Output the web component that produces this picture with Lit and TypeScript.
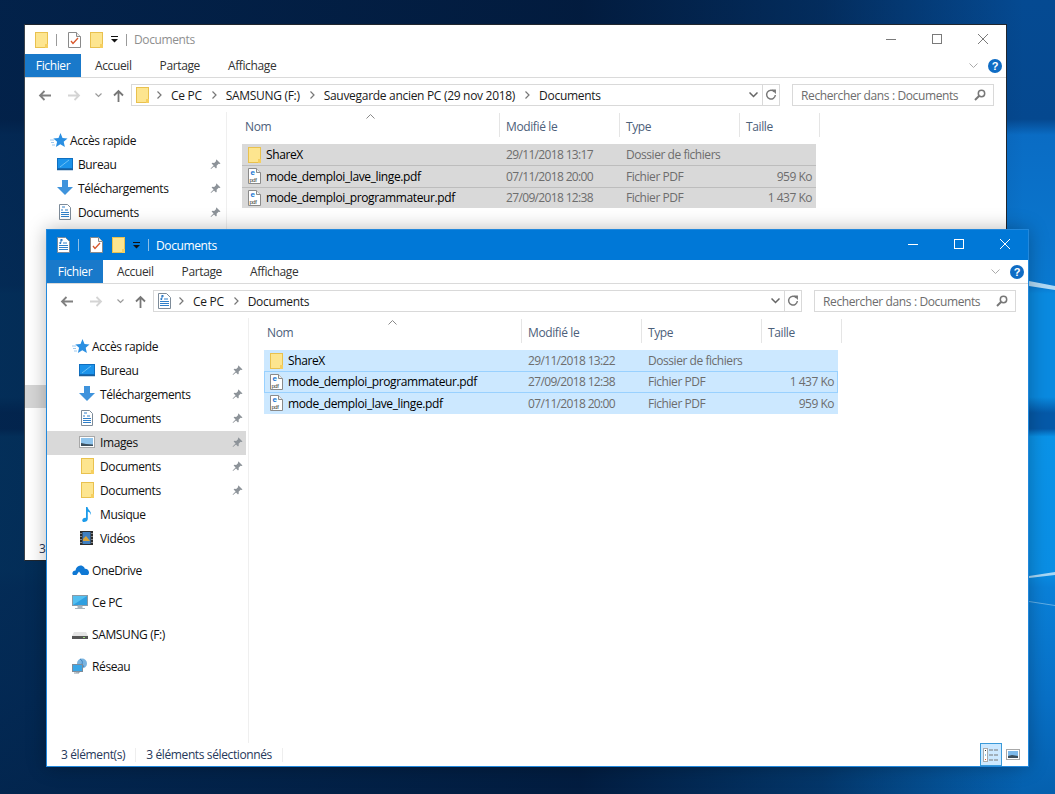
import { LitElement, css, html, svg, nothing } from "lit";
import { customElement, property } from "lit/decorators.js";

type FileRow = { name: string; date: string; type: string; size: string; folder?: boolean; focus?: boolean };

const folderIcon = () => html`<svg width="13" height="16" viewBox="0 0 13 16">
  <rect x=".5" y=".5" width="12" height="15" fill="#fde58f" stroke="#e9c14e" />
  <path d="M10 16v-4h3v4z" fill="#f6cf5f" />
</svg>`;

const pdfIcon = () => html`<svg width="13" height="16" viewBox="0 0 13 16">
  <path d="M.5.5h8l4 4v11H.5z" fill="#fff" stroke="#8a8a8a" />
  <path d="M8.5.5v4h4" fill="#eee" stroke="#8a8a8a" />
  <text x="2.600" y="7" font-size="8" font-weight="700" font-family="Liberation Sans" fill="#1473d0">e</text>
  <text x="1.500" y="13.800" font-size="5.800" font-family="Liberation Sans" fill="#333">pdf</text>
</svg>`;

const docIcon = () => html`<svg width="13" height="16" viewBox="0 0 13 16">
  <path d="M.5.5h8l4 4v11H.5z" fill="#fff" stroke="#7d8b99" />
  <path d="M3 3h3M2 6h2M6 6h4M2 8.500h9M2 10.500h9M2 12.500h9" stroke="#2f7fc9" />
  <path d="M4.500 2l-1 5" stroke="#1e6fc0" />
</svg>`;

const checkIcon = () => html`<svg width="13" height="16" viewBox="0 0 13 16">
  <path d="M.5.5h8l4 4v11H.5z" fill="#fff" stroke="#8a8a8a" />
  <path d="M8.500.5v4h4" fill="#eee" stroke="#8a8a8a" />
  <path d="M3 9l2 2.500L10 6" fill="none" stroke="#d8562a" stroke-width="1.300" />
</svg>`;

const pinIcon = () => html`<svg class="pin" width="11" height="11" viewBox="0 0 11 11">
  <path d="M6.500.5l4 4-1 .6-.9-.3-2 2 .2 1.800-.8.800-2-2L1 10l-.4-.4 3-3-2-2 .8-.8 1.800.2 2-2-.3-.9z" fill="#8d9399" />
</svg>`;

const navIcons: Record<string, unknown> = {
  star: svg`<path d="M10.500 1l2 5 5 .4-3.800 3.400 1.200 5.200-4.600-2.800-4.400 2.800 1.200-5.200-3.800-3.400 5.200-.4z" fill="#2a8fe2" /><path d="M0 8h4M1 10.500h3M2 13h3" stroke="#9cc8ee" />`,
  desk: svg`<rect x=".5" y="2.500" width="15" height="10" fill="#1c93ea" stroke="#0f6fc0" /><path d="M0 13.500h16" stroke="#1a5f9c" stroke-width="1.500" /><path d="M3 11l9-7" stroke="#6cc1f5" />`,
  down: svg`<path d="M5 0h6v7h5l-8 8-8-8h5z" fill="#3f93dc" />`,
  doc: svg`<path d="M2.500.5h8l3 3v12h-11z" fill="#fff" stroke="#7d8b99" /><path d="M5 3h3M4 6h2M8 6h3M4 8.500h8M4 10.500h8M4 12.500h8" stroke="#2f7fc9" />`,
  img: svg`<rect x=".5" y="2.500" width="15" height="11" fill="#fff" stroke="#a8a8a8" /><rect x="2" y="4" width="12" height="8" fill="#8fc4ec" /><path d="M2 9l5 1 7 .5V12H2z" fill="#3d4f5c" />`,
  folder: svg`<rect x="2.500" y=".5" width="12" height="15" fill="#fde58f" stroke="#e9c14e" /><path d="M12 16v-4h3v4z" fill="#f6cf5f" />`,
  music: svg`<path d="M7 1h1.500c.3 3 4 4 3.500 8-.5-2-2-3.200-3.200-3.500V13c0 2-2 3-3.800 3S3 14.500 3.500 13.500 5.500 11.500 7 12z" fill="#1c9bea" />`,
  video: svg`<rect x="1" y="1" width="13" height="14" fill="#2c2c2c" /><rect x="3.500" y="2" width="8" height="12" fill="#3f7fc0" /><path d="M4 9l3-3 4 5H4z" fill="#d8a33a" /><path d="M2 3v1M2 6v1M2 9v1M2 12v1M13 3v1M13 6v1M13 9v1M13 12v1" stroke="#ddd" />`,
  cloud: svg`<path d="M1 13c-1.500-2 0-4.500 2.500-4.500C4 5 7 2.500 10.500 4c1 .5 2 1.500 2.300 2.700C15 6.500 17 8 17 10.500c0 1.200-.5 2-1.200 2.500H9.500L7 9.500 4.500 13z" fill="#0f78d4" />`,
  pc: svg`<rect x=".5" y="1.500" width="15" height="10" fill="#53bff0" stroke="#8a9aa6" /><path d="M1 11l14-9v9z" fill="#2f9fe0" /><path d="M6 12h4v2H6zM3 14.500h10" fill="#a8b4bc" stroke="#a8b4bc" />`,
  drive: svg`<path d="M2 6h12l2 4H0z" fill="#e4e4e4" /><rect x="0" y="10" width="16" height="3" fill="#555" /><rect x="11" y="11" width="2" height="1" fill="#9ee07a" />`,
  net: svg`<circle cx="10" cy="5.500" r="5" fill="#7ab4e0" /><path d="M8 1c2 1 3 3 2 5l2 3" stroke="#3d82bf" fill="none" /><rect x=".5" y="6.500" width="10" height="7" fill="#3aa6e6" stroke="#7d8b99" /><path d="M4 14h3v1H2" stroke="#8b98a3" fill="none" />`,
};

const navIcon = (name: string) => html`<svg class="nav-ico" width="18" height="16" viewBox="0 0 18 16">${navIcons[name]}</svg>`;

@customElement("explorer-window")
class ExplorerWindow extends LitElement {
  @property({ type: Boolean, reflect: true }) active = false;
  @property({ attribute: false }) crumbs: string[] = [];
  @property() location = "folder";
  @property({ attribute: false }) rows: FileRow[] = [];

  static styles = css`
    :host {
      position: absolute;
      display: flex;
      flex-direction: column;
      box-sizing: border-box;
      background: #fff;
      color: #000;
      border: 1px solid #20262e;
      border-left-color: #3c444d;
      font: 12px "Open Sans", sans-serif;
      letter-spacing: -0.38px;
      overflow: hidden;
    }
    :host([active]) {
      border-color: #2288dc;
      box-shadow: 0 0 18px rgba(0, 0, 0, 0.28);
    }
    .title {
      height: 29px;
      flex: none;
      display: flex;
      align-items: center;
      padding-left: 10px;
      color: #8f8f8f;
    }
    :host([active]) .title {
      height: 30px;
      background: #0078d7;
      color: #fff;
    }
    .sep {
      width: 1px;
      height: 12px;
      margin-left: 8px;
      background: #9a9a9a;
    }
    :host([active]) .sep {
      background: #8cbfe8;
    }
    .qa {
      display: flex;
      align-items: center;
    }
    .qa.check {
      margin-left: 11px;
    }
    .qa.second {
      margin-left: 9px;
    }
    .caret {
      width: 7px;
      height: 7px;
      margin-left: 8px;
    }
    .caption {
      margin-left: 7px;
    }
    .winbtns {
      margin-left: auto;
      display: flex;
      padding-bottom: 2px;
    }
    .winbtns span {
      width: 46px;
      display: flex;
      align-items: center;
      justify-content: center;
    }
    .winbtns svg {
      stroke: #7a7a7a;
    }
    :host([active]) .winbtns svg {
      stroke: #fff;
    }
    .ribbon {
      height: 24px;
      flex: none;
      box-sizing: border-box;
      display: flex;
      align-items: stretch;
      border-bottom: 1px solid #dadada;
      color: #333;
    }
    .tab {
      padding: 0 14px;
      display: flex;
      align-items: center;
    }
    .tab.file {
      width: 56px;
      box-sizing: border-box;
      padding: 0;
      justify-content: center;
      background: #1979ca;
      color: #fff;
    }
    .ribbon-end {
      margin-left: auto;
      display: flex;
      align-items: center;
      gap: 10px;
      padding-right: 4px;
    }
    .help {
      width: 14px;
      height: 14px;
      border-radius: 50%;
      background: #0f6cc4;
      color: #fff;
      font: 700 11px/14px "Liberation Sans", sans-serif;
      text-align: center;
      letter-spacing: 0;
    }
    .toolbar {
      height: 34px;
      flex: none;
      display: flex;
      align-items: center;
      padding: 0 12px 0 13px;
    }
    .navs {
      display: flex;
      align-items: center;
      width: 93px;
      flex: none;
    }
    .navs .fwd {
      margin-left: 17px;
    }
    .navs .recent {
      margin-left: 14px;
    }
    .navs .up {
      margin-left: 10px;
    }
    .crumbbar {
      flex: 1;
      height: 22px;
      box-sizing: border-box;
      border: 1px solid #d9d9d9;
      display: flex;
      align-items: center;
      padding-left: 4px;
      color: #1a1a1a;
      letter-spacing: -0.3px;
    }
    .crumbbar .ico {
      display: flex;
      margin-right: 8px;
    }
    .crumb-arrow {
      margin-right: 9px;
      display: flex;
    }
    .crumb {
      margin-right: 10px;
      white-space: nowrap;
    }
    .bar-end {
      margin-left: auto;
      display: flex;
      align-items: center;
      height: 100%;
    }
    .bar-end .drop {
      width: 17px;
      display: flex;
      justify-content: center;
    }
    .bar-end .refresh {
      width: 16px;
      height: 100%;
      border-left: 1px solid #d9d9d9;
      display: flex;
      align-items: center;
      justify-content: center;
    }
    .search {
      width: 202px;
      height: 22px;
      box-sizing: border-box;
      margin-left: 12px;
      border: 1px solid #d9d9d9;
      display: flex;
      align-items: center;
      justify-content: space-between;
      padding: 0 7px 0 8px;
      color: #6d6d6d;
    }
    .main {
      flex: 1;
      display: flex;
      min-height: 0;
    }
    .nav {
      width: 201px;
      flex: none;
      border-right: 1px solid #efefef;
      padding-top: 17px;
    }
    .nav-row {
      height: 24px;
      box-sizing: border-box;
      padding-bottom: 2px;
      display: flex;
      align-items: center;
      margin-right: 2px;
      color: #111;
      white-space: nowrap;
    }
    .nav-row.sel {
      background: #d9d9d9;
    }
    .nav-row.l1 {
      padding-left: 32px;
    }
    .nav-row.l1 .nav-ico {
      margin-right: 3px;
    }
    .nav-row.l0 {
      padding-left: 25px;
    }
    .nav-row.l0 .nav-ico {
      margin-right: 2px;
    }
    .nav-row.sp {
      margin-top: 8px;
    }
    .nav-band {
      height: 23px;
      margin-top: 160px;
      background: #d6d6d6;
    }
    .nav-ico {
      flex: none;
    }
    .pin {
      margin-left: auto;
      margin-right: 3px;
    }
    .content {
      flex: 1;
      min-width: 0;
      padding-left: 15px;
      position: relative;
    }
    .cols {
      display: grid;
      grid-template-columns: 258px 120px 120px 80px;
      height: 24px;
      margin: 1px 0 7px;
      color: #4c607a;
    }
    .cols span {
      border-right: 1px solid #e5e5e5;
      display: flex;
      align-items: center;
      padding-left: 6px;
      padding-top: 2px;
    }
    .cols span:first-child {
      padding-left: 3px;
    }
    .sort {
      position: absolute;
      top: 2px;
      left: 139px;
    }
    .row {
      display: grid;
      grid-template-columns: 258px 120px 120px 76px;
      width: 574px;
      height: 21px;
      box-sizing: border-box;
      align-items: center;
      color: #6d6d6d;
    }
    .row + .row {
      height: 21.5px;
    }
    .row > span {
      padding-left: 6px;
      white-space: nowrap;
    }
    .row .name {
      display: flex;
      align-items: center;
      gap: 5px;
      color: #000;
    }
    .row .date {
      letter-spacing: -0.65px;
    }
    .row .type {
      letter-spacing: -0.45px;
    }
    .row .size {
      text-align: right;
      padding-right: 4px;
      letter-spacing: -0.5px;
    }
    .row.grey {
      background: #d9d9d9;
    }
    .row.grey + .row.grey {
      border-top: 1px solid #bdbdbd;
    }
    .row.blue {
      background: #cce8ff;
    }
    .row.blue.focus {
      outline: 1px solid #99d1ff;
      outline-offset: -1px;
    }
    .status {
      height: 23px;
      flex: none;
      display: flex;
      align-items: center;
      color: #26385a;
      padding: 0 4px 0 14px;
    }
    .status i {
      width: 1px;
      height: 14px;
      background: #eee;
      margin: 0 10px;
    }
    .views {
      margin-left: auto;
      display: flex;
      align-items: stretch;
      height: 23px;
    }
    .view {
      width: 22px;
      display: flex;
      align-items: center;
      justify-content: center;
    }
    .view.on {
      box-sizing: border-box;
      background: #cce8ff;
      border: 1px solid #3a9ad9;
    }
  `;

  private arrowIcon(dir: "l" | "r" | "u", color: string, cls = "") {
    const d = { l: "M13 6.500H2M6.500 2L2 6.500 6.500 11", r: "M0 6.500h11M6.500 2L11 6.500 6.500 11", u: "M6.500 13V2M2 6.500L6.500 2 11 6.500" }[dir];
    return html`<svg class=${cls} width="13" height="13" viewBox="0 0 13 13"><path d=${d} fill="none" stroke=${color} stroke-width="1.800" /></svg>`;
  }

  private locationIcon() {
    return this.location === "docs" ? docIcon() : folderIcon();
  }

  private quick(icon: string, label: string, pinned = false, sel = false) {
    return html`<div class="nav-row l1 ${sel ? "sel" : ""}">
      ${navIcon(icon)}${label}${pinned ? pinIcon() : nothing}
    </div>`;
  }

  // the back window only paints what sticks out from behind the front one
  private renderNav() {
    if (!this.active) {
      return html`
        <div class="nav-row l0">${navIcon("star")}Accès rapide</div>
        ${this.quick("desk", "Bureau", true)} ${this.quick("down", "Téléchargements", true)}
        ${this.quick("doc", "Documents", true)}
        <div class="nav-band"></div>
      `;
    }
    return html`
      <div class="nav-row l0">${navIcon("star")}Accès rapide</div>
      ${this.quick("desk", "Bureau", true)} ${this.quick("down", "Téléchargements", true)}
      ${this.quick("doc", "Documents", true)} ${this.quick("img", "Images", true, true)}
      ${this.quick("folder", "Documents", true)} ${this.quick("folder", "Documents", true)}
      ${this.quick("music", "Musique")} ${this.quick("video", "Vidéos")}
      <div class="nav-row l0 sp">${navIcon("cloud")}OneDrive</div>
      <div class="nav-row l0 sp">${navIcon("pc")}Ce PC</div>
      <div class="nav-row l0 sp">${navIcon("drive")}SAMSUNG (F:)</div>
      <div class="nav-row l0 sp">${navIcon("net")}Réseau</div>
    `;
  }

  private renderStatus() {
    if (!this.active) return html`<div class="status">3</div>`;
    return html`<div class="status">
      3 élément(s)<i></i>3 éléments sélectionnés<i></i>
      <span class="views">
        <span class="view on"><svg width="16" height="14" viewBox="0 0 16 14"><rect x=".5" y=".5" width="4" height="13" fill="#fff" stroke="#aaa" /><path d="M6 2h4M11 2h4M6 7h4M11 7h4M6 12h4M11 12h4" stroke="#777" /><path d="M2 2h1v1H2z" fill="#333" /><path d="M2 6.500h1v1H2z" fill="#2a8fe2" /><path d="M2 11h1v1H2z" fill="#d8562a" /></svg></span>
        <span class="view"><svg width="14" height="11" viewBox="0 0 14 11"><rect x=".5" y=".5" width="13" height="10" fill="#fff" stroke="#a8a8a8" /><rect x="2" y="2" width="10" height="7" fill="#7db9ea" /><path d="M2 7l4-1 6 1v2H2z" fill="#3d4f5c" /></svg></span>
      </span>
    </div>`;
  }

  render() {
    return html`
      <div class="title">
        <span class="qa">${this.locationIcon()}</span>
        <span class="sep"></span>
        <span class="qa check">${checkIcon()}</span>
        <span class="qa second">${folderIcon()}</span>
        <svg class="caret" viewBox="0 0 7 7">
          <path d="M0 .5h7" stroke="#111" />
          <path d="M0 3h7L3.500 6.500z" fill="#111" />
        </svg>
        <span class="sep"></span>
        <span class="caption">Documents</span>
        <div class="winbtns">
          <span><svg width="10" height="10" viewBox="0 0 10 10"><path d="M0 5.500h10" /></svg></span>
          <span><svg width="10" height="10" viewBox="0 0 10 10"><rect x=".5" y=".5" width="9" height="9" fill="none" /></svg></span>
          <span><svg width="10" height="10" viewBox="0 0 10 10"><path d="M0 0l10 10M10 0L0 10" /></svg></span>
        </div>
      </div>
      <div class="ribbon">
        <span class="tab file">Fichier</span>
        <span class="tab">Accueil</span>
        <span class="tab">Partage</span>
        <span class="tab">Affichage</span>
        <span class="ribbon-end">
          <svg width="9" height="6" viewBox="0 0 9 6"><path d="M.5.5l4 4 4-4" fill="none" stroke="#aaa" /></svg>
          <span class="help">?</span>
        </span>
      </div>
      <div class="toolbar">
        <div class="navs">
          ${this.arrowIcon("l", "#808080")} ${this.arrowIcon("r", "#d4d4d4", "fwd")}
          <svg class="recent" width="7" height="5" viewBox="0 0 7 5"><path d="M.5.5l3 3 3-3" fill="none" stroke="#9a9a9a" stroke-width="1.200" /></svg>
          ${this.arrowIcon("u", "#777", "up")}
        </div>
        <div class="crumbbar">
          <span class="ico">${this.locationIcon()}</span>
          ${this.crumbs.map(
            (c) => html`<span class="crumb-arrow"><svg width="5" height="8" viewBox="0 0 5 8"><path d="M.5.5L4 4 .5 7.500" fill="none" stroke="#777" stroke-width="1.200" /></svg></span><span class="crumb">${c}</span>`
          )}
          <span class="bar-end">
            <span class="drop"><svg width="9" height="6" viewBox="0 0 9 6"><path d="M.5.5l4 4 4-4" fill="none" stroke="#666" stroke-width="1.500" /></svg></span>
            <span class="refresh"><svg width="12" height="12" viewBox="0 0 11 11"><path d="M8.500 2.500a4 4 0 1 0 1 3" fill="none" stroke="#777" stroke-width="1.300" /><path d="M6 .5h4v4z" fill="#777" /></svg></span>
          </span>
        </div>
        <div class="search">
          <span>Rechercher dans : Documents</span>
          <svg width="12" height="12" viewBox="0 0 12 12"><circle cx="7.500" cy="4.500" r="3.200" fill="none" stroke="#777" stroke-width="1.500" /><path d="M5 7l-4 4" stroke="#777" stroke-width="2" /></svg>
        </div>
      </div>
      <div class="main">
        <div class="nav">${this.renderNav()}</div>
        <div class="content">
          <svg class="sort" width="9" height="5" viewBox="0 0 9 5"><path d="M.5 4.500l4-4 4 4" fill="none" stroke="#888" /></svg>
          <div class="cols"><span>Nom</span><span>Modifié le</span><span>Type</span><span>Taille</span></div>
          ${this.rows.map(
            (r) => html`<div class="row ${this.active ? "blue" : "grey"} ${r.focus ? "focus" : ""}">
              <span class="name">${r.folder ? folderIcon() : pdfIcon()}${r.name}</span>
              <span class="date">${r.date}</span><span class="type">${r.type}</span><span class="size">${r.size}</span>
            </div>`
          )}
        </div>
      </div>
      ${this.renderStatus()}
    `;
  }
}

const backRows: FileRow[] = [
  { name: "ShareX", date: "29/11/2018 13:17", type: "Dossier de fichiers", size: "", folder: true },
  { name: "mode_demploi_lave_linge.pdf", date: "07/11/2018 20:00", type: "Fichier PDF", size: "959 Ko" },
  { name: "mode_demploi_programmateur.pdf", date: "27/09/2018 12:38", type: "Fichier PDF", size: "1 437 Ko" },
];

const frontRows: FileRow[] = [
  { name: "ShareX", date: "29/11/2018 13:22", type: "Dossier de fichiers", size: "", folder: true },
  { name: "mode_demploi_programmateur.pdf", date: "27/09/2018 12:38", type: "Fichier PDF", size: "1 437 Ko", focus: true },
  { name: "mode_demploi_lave_linge.pdf", date: "07/11/2018 20:00", type: "Fichier PDF", size: "959 Ko" },
];

@customElement("app-root")
export class AppRoot extends LitElement {
  static styles = css`
    :host {
      display: block;
      position: relative;
      width: 1055px;
      height: 794px;
      overflow: hidden;
      background: #02193a;
    }
    .wall {
      position: absolute;
      inset: 0;
    }
    .back {
      left: 24px;
      top: 24px;
      width: 983px;
      height: 537px;
    }
    .front {
      left: 46px;
      top: 229px;
      width: 983px;
      height: 538px;
    }
  `;

  render() {
    return html`
      <svg class="wall" width="1055" height="794" viewBox="0 0 1055 794">
        <defs>
          <linearGradient id="sky" x1="0" y1="0" x2="0" y2="1">
            <stop offset="0" stop-color="#054a92" />
            <stop offset=".15" stop-color="#05488f" />
            <stop offset=".17" stop-color="#0a6cc4" />
            <stop offset=".36" stop-color="#0a79d0" />
            <stop offset=".37" stop-color="#0a8ae0" />
            <stop offset=".5" stop-color="#0a8ae0" />
            <stop offset=".52" stop-color="#0559a8" />
            <stop offset=".54" stop-color="#0559a8" />
            <stop offset=".55" stop-color="#0a93e8" />
            <stop offset=".72" stop-color="#0a8ee4" />
            <stop offset=".74" stop-color="#0a80d8" />
            <stop offset=".88" stop-color="#0870c6" />
            <stop offset="1" stop-color="#0560ae" />
          </linearGradient>
          <linearGradient id="shade" x1="0" y1="0" x2="1" y2="0">
            <stop offset="0" stop-color="#02193a" stop-opacity=".82" />
            <stop offset=".55" stop-color="#02193a" stop-opacity=".95" />
            <stop offset=".78" stop-color="#02193a" stop-opacity=".6" />
            <stop offset=".97" stop-color="#02193a" stop-opacity="0" />
          </linearGradient>
        </defs>
        <rect width="1055" height="794" fill="url(#sky)" />
        <rect width="1055" height="794" fill="url(#shade)" />
        <path d="M1029 281l26 5v4l-26-4z" fill="#cfeafa" opacity=".85" />
        <path d="M1029 576l26-4v3l-26 3z" fill="#cfeafa" opacity=".8" />
        <path d="M1029 601l26 4v1l-26-4z" fill="#cfeafa" opacity=".45" />
      </svg>
      <explorer-window class="back" .crumbs=${["Ce PC", "SAMSUNG (F:)", "Sauvegarde ancien PC (29 nov 2018)", "Documents"]} .rows=${backRows}></explorer-window>
      <explorer-window class="front" active location="docs" .crumbs=${["Ce PC", "Documents"]} .rows=${frontRows}></explorer-window>
    `;
  }
}
